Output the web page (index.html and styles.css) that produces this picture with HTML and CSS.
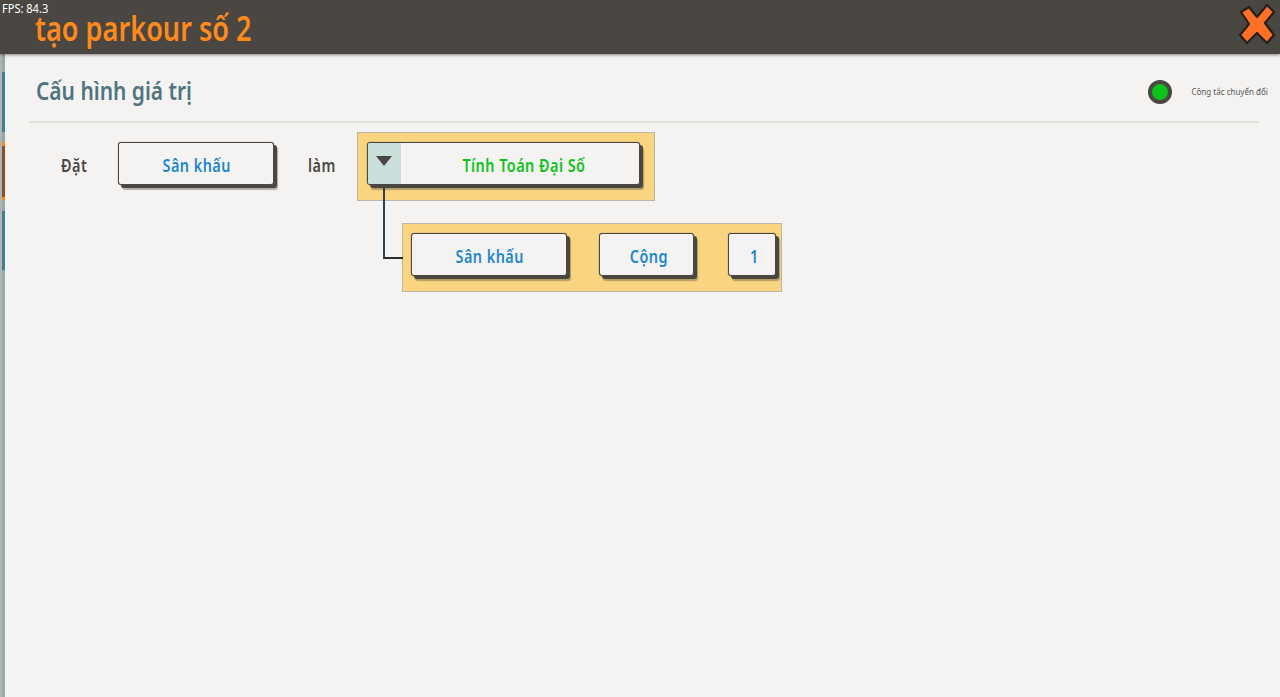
FILE: index.html
```html
<!DOCTYPE html>
<html lang="vi">
<head>
<meta charset="utf-8">
<title>tạo parkour số 2</title>
<link rel="stylesheet" href="styles.css">
</head>
<body>
<div class="fps">FPS: 84.3</div>
<header class="topbar">
  <h1 class="topbar-title">tạo parkour số 2</h1>
  <button class="close" aria-label="Đóng">
    <svg width="38" height="42" viewBox="0 0 38 42"><path d="M3 9 11 4 19 14 29 2 36 9 27 20 36 32 29 40 19 30 9 40 2 32 11 21Z" fill="#ff7027" stroke="#24201c" stroke-width="2.2" stroke-linejoin="round"/></svg>
  </button>
</header>
<div class="body">
  <aside class="rail">
    <span class="seg pale s17"></span>
    <span class="seg teal s60"></span>
    <span class="seg pale s10"></span>
    <span class="seg orange s4"></span>
    <span class="seg brown s51"></span>
    <span class="seg orange s3"></span>
    <span class="seg pale s11"></span>
    <span class="seg teal s59"></span>
    <span class="seg pale grow"></span>
  </aside>
  <main class="panel">
    <div class="panel-head">
      <h2 class="panel-title">Cấu hình giá trị</h2>
      <div class="toggle">
        <span class="led"></span>
        <span class="toggle-label">Công tắc chuyển đổi</span>
      </div>
    </div>
    <div class="expr-row">
      <span class="word word-set"><span class="narrow narrow-left">Đặt</span></span>
      <button class="chip chip-stage"><span class="narrow">Sân khấu</span></button>
      <span class="word word-as"><span class="narrow narrow-left">làm</span></span>
      <div class="expr-col">
        <div class="tray tray-top">
          <button class="chip chip-select">
            <span class="caret"><svg width="16" height="10" viewBox="0 0 16 10"><path d="M0 0H16L8 10Z" fill="#4a4641"/></svg></span>
            <span class="chip-select-text"><span class="narrow">Tính Toán Đại Số</span></span>
          </button>
        </div>
        <div class="tray tray-sub">
          <span class="connector"></span>
          <button class="chip chip-stage"><span class="narrow">Sân khấu</span></button>
          <button class="chip chip-op"><span class="narrow">Cộng</span></button>
          <button class="chip chip-num"><span class="narrow">1</span></button>
        </div>
      </div>
    </div>
  </main>
</div>
</body>
</html>
```

FILE: styles.css
```css
* { box-sizing: border-box; }
html, body { height: 100%; }
body {
  margin: 0;
  display: flex;
  flex-direction: column;
  overflow: hidden;
  background: #f4f3f2;
  font-family: "Noto Sans", "Open Sans", sans-serif;
}
h1, h2 { margin: 0; font-weight: 400; }
button { font: inherit; padding: 0; cursor: pointer; }

.narrow { display: inline-block; transform: scaleX(.8); letter-spacing: .6px; }
.narrow-left { transform-origin: left center; }

.fps {
  position: absolute;
  left: 2px;
  top: 1px;
  color: #fff;
  font-size: 12px;
  line-height: 15px;
  z-index: 2;
  transform: scaleX(.92);
  transform-origin: left center;
}

.topbar {
  flex: none;
  height: 54px;
  padding: 0 4px 0 35px;
  display: flex;
  align-items: flex-start;
  justify-content: space-between;
  background: #4a4641;
  box-shadow: 0 1px 3px rgba(60, 58, 54, .6);
  position: relative;
  z-index: 1;
}
.topbar-title {
  color: #ff8a1c;
  font-size: 34px;
  line-height: 44px;
  margin-top: 6px;
  font-weight: 600;
  transform: scaleX(.797);
  transform-origin: left center;
  white-space: nowrap;
}
.close { border: 0; background: none; margin-top: 3px; display: block; }

.body { flex: 1; display: flex; min-height: 0; }
.rail {
  flex: none;
  width: 5px;
  border-left: 2px solid #b3b3b1;
  display: flex;
  flex-direction: column;
}
.seg { display: block; }
.pale { background: #8fabaa; }
.teal { background: #42808f; }
.orange { background: #ff8a1c; }
.brown { background: #85502c; }
.s17 { height: 18px; }
.s60 { height: 60px; }
.s10 { height: 10px; }
.s4 { height: 4px; }
.s51 { height: 51px; }
.s3 { height: 3px; }
.s11 { height: 11px; }
.s59 { height: 59px; }
.grow { flex: 1; }

.panel { flex: 1; padding: 0 21px 0 24px; min-width: 0; }
.panel-head {
  height: 69px;
  padding: 0 0 0 7px;
  display: flex;
  align-items: center;
  justify-content: space-between;
  border-bottom: 2px solid #dbe3d8;
}
.panel-title {
  color: #4f7480;
  font-size: 26px;
  line-height: 34px;
  font-weight: 600;
  margin-top: 4px;
  transform: scaleX(.805);
  transform-origin: left center;
  white-space: nowrap;
}
.toggle { display: flex; align-items: center; gap: 10px; margin-right: -9px; margin-top: 8px; }
.led {
  width: 24px;
  height: 24px;
  border-radius: 50%;
  background: #0cc31c;
  border: 4px solid #4a4641;
}
.toggle-label {
  color: #5a5a58;
  font-size: 9px;
  line-height: 12px;
  transform: scaleX(.89);
  transform-origin: right center;
  white-space: nowrap;
}

.expr-row { display: flex; align-items: flex-start; padding: 9px 0 0 31px; }
.word {
  color: #4a4641;
  font-size: 18px;
  font-weight: 600;
  line-height: 24px;
  margin-top: 21px;
}
.word-set { width: 58px; padding-left: 1px; }
.word-as { width: 49px; margin-left: 34px; }

.chip {
  height: 43px;
  padding: 2px 0 0 2px;
  background: #f4f3f2;
  border: 1px solid #4a4641;
  border-radius: 3px;
  box-shadow: 0 0 1px #4a4641, 3px 3px 0 #4a4641, 4px 5px 1px rgba(74, 70, 65, .4);
  color: #1c87c9;
  font-size: 18px;
  font-weight: 600;
  line-height: 24px;
  margin-top: 10px;
}
.chip-stage { width: 156px; }
.chip-op { width: 95px; margin-left: 32px; padding-left: 4px; }
.chip-num { width: 48px; margin-left: 34px; padding-left: 4px; }

.expr-col { display: flex; flex-direction: column; align-items: flex-start; }
.tray {
  background: #f9d57f;
  border: 1px solid #b9b5a8;
  height: 69px;
  display: flex;
  align-items: flex-start;
}
.tray .chip { margin-top: 9px; }
.tray-top { width: 298px; padding-left: 9px; }
.tray-sub { width: 380px; margin: 22px 0 0 45px; padding-left: 8px; position: relative; }

.chip-select {
  width: 273px;
  padding: 0;
  display: flex;
  align-items: stretch;
  color: #0cc31c;
  overflow: hidden;
}
.caret {
  flex: none;
  width: 33px;
  background: #c8dfdc;
  display: flex;
  justify-content: center;
  padding: 13px 2px 0 0;
}
.chip-select-text { flex: 1; text-align: center; line-height: 45px; padding-left: 7px; }

.connector {
  position: absolute;
  left: -20px;
  top: -36px;
  width: 20px;
  height: 71px;
  border-left: 2px solid #2c4258;
  border-bottom: 2px solid #2c2c2c;
}
```
